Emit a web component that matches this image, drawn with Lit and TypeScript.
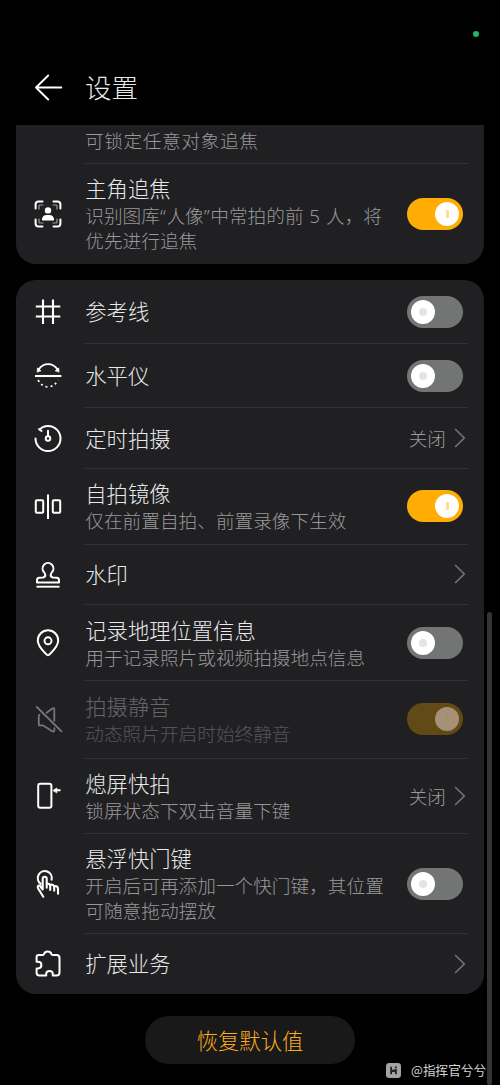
import { LitElement, html, svg, css, nothing } from "lit";
import { customElement, property } from "lit/decorators.js";
import { classMap } from "lit/directives/class-map.js";

const glyphs: Record<string, unknown> = {
  back: svg`<path d="M28.300 14.500H3M15.200 2.500 3 14.500l12.200 12" stroke-width="1.900"/>`,
  focus: svg`
    <path d="M2.600 9.500V5.600q0-3 3-3h3.900M20.500 2.600h3.900q3 0 3 3v3.900M27.400 20.500v3.900q0 3-3 3h-3.900M9.500 27.400H5.600q-3 0-3-3v-3.900" stroke-width="2"/>
    <path d="M6 10V7q0-1 1-1h3M20 6h3q1 0 1 1v3M24 20v3q0 1-1 1h-3M10 24H7q-1 0-1-1v-3" stroke-width="1.200" opacity=".55"/>
    <circle cx="15" cy="11.400" r="3.200" fill="currentColor" stroke="none"/>
    <path d="M9 21.400v-1.600q.7-3.900 4.500-3.900h3q3.800 0 4.500 3.900v1.600z" fill="currentColor" stroke="none"/>`,
  grid: svg`<path d="M10 2.500v24.500M20 2.500v24.500M2.800 9.500h24.500M2.800 19.500h24.500" stroke-width="2.100" stroke-linecap="butt"/>`,
  level: svg`
    <path d="M2 15h26.400" stroke-width="2.100" stroke-linecap="butt"/>
    <path d="M5.600 8.500q3.700-5.400 9.500-5.400t9.500 5.400" stroke-width="1.900"/>
    <path d="M4.200 10.800l.3-3.800 3.200 2.600zM26 10.800l-.3-3.800-3.200 2.600z" fill="currentColor" stroke-width=".8"/>
    <path d="M5.100 19q3.700 6.800 10 6.800t10-6.800" stroke-width="1.700" stroke-dasharray="2 3" stroke-linecap="butt"/>`,
  timer: svg`
    <path d="M2.500 14.500A12.500 12.500 0 1 0 15 2q-5.200 0-8.300 3.600" stroke-width="2"/>
    <path d="M6 5l2.600 2" stroke-width="1.900"/>
    <path d="M15 6.800v5.200" stroke-width="2"/><circle cx="15" cy="14.500" r="2.300" stroke-width="1.900"/>`,
  mirror: svg`<path d="M15 2.500v24.500" stroke-width="2" stroke-linecap="butt"/>
    <rect x="2.800" y="8.200" width="7.400" height="12.500" rx="1" stroke-width="2"/>
    <rect x="19.800" y="8.200" width="7.400" height="12.500" rx="1" stroke-width="2"/>`,
  stamp: svg`<path d="M4 22.500v-2.400q0-2.200 2.300-2.400l3.700-.3q2.500-.4 2.300-2.400 0-1.200-1.400-3a5.400 5.400 0 1 1 8.200 0q-1.400 1.800-1.400 3-.2 2 2.300 2.400l3.700.3q2.300.2 2.300 2.400v2.400z" stroke-width="2"/>
    <path d="M3.500 26.700h23" stroke-width="1.900" stroke-linecap="butt"/>`,
  pin: svg`<path d="M15 27.200q-.9 0-1.600-.8C10 22.800 4.800 18.300 4.800 12.500a10.200 10.200 0 0 1 20.400 0c0 5.800-5.200 10.300-8.600 13.900q-.7.800-1.600.8z" stroke-width="2"/>
    <circle cx="15" cy="12.800" r="3.500" stroke-width="1.900"/>`,
  mute: svg`<path d="M3.800 2l24.700 24.300" stroke-width="1.800"/>
    <path d="M6.400 9.800q-.6.500-.6 1.300v9.300h3.700q.8 0 1.500.5l8.200 5.300q2 1 2.200-1.200v-1.900" stroke-width="1.800"/>
    <path d="M13.700 7.700l5.600-4.200q2-1.200 2 .8v11.500" stroke-width="1.800"/>`,
  phone: svg`<rect x="5.200" y="2.800" width="13.200" height="24" rx="2" stroke-width="2"/>
    <path d="M26.800 9.300h-5" stroke-width="1.900"/><path d="M20.300 9.300l3.500-2.300v4.600z" fill="currentColor" stroke-width=".8"/>`,
  touch: svg`<path d="M7.700 14.800a7 7 0 1 1 10.900-4" stroke-width="2.100"/>
    <path d="M9.700 20.500V9.700q0-2 2-2t2 2v9M13.700 14.600q3.300-.4 3.500 2.600v3.800M17.400 15.700q3.600-.4 3.800 2.500v3.500M21.300 17q3.700-.2 3.700 3v4.700M9.700 20.500l-2.600-3.500q-1.700-1.200-2.300.5-.2 1 .5 2.200l5 8" stroke-width="2.100"/>`,
  puzzle: svg`<path d="M5.600 6.100h4.200q1 0 1.200-1Q11.800 2.500 14.700 2.500t3.700 2.600q.2 1 1.200 1h4q2.900 0 2.900 2.900v14.500q0 2.900-2.900 2.900h-3.800v-1.300q0-3.100-3.300-3.100t-3.300 3.100v1.300H6.200q-2.600 0-2.600-2.600v-4.400H5q3.400 0 3.400-3.300T5 12.800H3.600V8.100q0-2 2-2z" stroke-width="2"/>`,
};

const icon = (name: string) => html`<svg class="icon" width="30" height="30" viewBox="0 0 30 30" fill="none"
  stroke="currentColor" stroke-linecap="round" stroke-linejoin="round">${glyphs[name]}</svg>`;

@customElement("toggle-switch")
class ToggleSwitch extends LitElement {
  @property({ type: Boolean }) on = false;
  @property({ type: Boolean }) disabled = false;
  static styles = css`
    :host { display: block; }
    .track { box-sizing: border-box; width: 56px; height: 32px; border-radius: 16px; padding: 4px; background: #737474; display: flex; }
    .track.on { background: #ffad05; justify-content: flex-end; }
    .knob { width: 24px; height: 24px; border-radius: 50%; background: #fff; display: grid; place-items: center; }
    .mark { width: 8px; height: 8px; border-radius: 50%; background: #e4e4e4; }
    .on .mark { width: 3px; height: 8px; border-radius: 1px; background: #ffdc91; }
    .track.disabled { background: #624a17; }
    .disabled .knob { background: #a59175; }
    .disabled .mark { background: #a58e64; }
  `;
  render() {
    return html`<div class=${classMap({ track: true, on: this.on, disabled: this.disabled })}><div class="knob"><div class="mark"></div></div></div>`;
  }
}

interface Item {
  icon: string;
  title: string;
  sub?: unknown;
  height: number;
  on?: boolean;
  value?: string;
  disabled?: boolean;
}

const tracking: Item = {
  icon: "focus",
  title: "主角追焦",
  sub: html`识别图库<span class="latin">“</span>人像<span class="latin">”</span>中常拍的前<span class="latin"> 5 </span>人，将<br />优先进行追焦`,
  height: 100,
  on: true,
};

const items: Item[] = [
  { icon: "grid", title: "参考线", height: 64, on: false },
  { icon: "level", title: "水平仪", height: 64, on: false },
  { icon: "timer", title: "定时拍摄", height: 61, value: "关闭" },
  { icon: "mirror", title: "自拍镜像", sub: "仅在前置自拍、前置录像下生效", height: 75.5, on: true },
  { icon: "stamp", title: "水印", height: 60.5 },
  { icon: "pin", title: "记录地理位置信息", sub: "用于记录照片或视频拍摄地点信息", height: 76, on: false },
  { icon: "mute", title: "拍摄静音", sub: "动态照片开启时始终静音", height: 77.5, on: true, disabled: true },
  { icon: "phone", title: "熄屏快拍", sub: "锁屏状态下双击音量下键", height: 75.5, value: "关闭" },
  { icon: "touch", title: "悬浮快门键", sub: html`开启后可再添加一个快门键，其位置<br />可随意拖动摆放`, height: 100, on: false },
  { icon: "puzzle", title: "扩展业务", height: 60 },
];

@customElement("app-root")
class AppRoot extends LitElement {
  static styles = css`
    :host {
      display: flex; flex-direction: column; position: relative; box-sizing: border-box;
      width: 500px; height: 1085px; overflow: hidden; background: #000; color: #e9e9ea;
      font-family: "Noto Sans CJK SC", sans-serif; font-weight: 300;
    }
    .status { height: 50px; display: flex; justify-content: flex-end; padding: 31px 21px 0 0; box-sizing: border-box; }
    .dot { width: 6px; height: 6px; border-radius: 50%; background: #20b567; }
    .header { height: 75px; display: flex; padding-left: 33px; gap: 22px; align-items: center; }
    .heading { margin: 0; padding-bottom: 1px; font-size: 26.500px; font-weight: 300; line-height: 40px; }
    .icon { display: block; flex: none; color: #fff; }
    .card { margin: 0 16px; background: #202022; border-radius: 0 0 20px 20px; }
    .card.full { margin-top: 16px; border-radius: 20px; }
    .tail { height: 39px; box-sizing: border-box; margin: 0 16px 0 69px; padding-top: 2px; border-bottom: 1px solid #333335; }
    .tail .sub { letter-spacing: .62px; }
    .row { display: flex; padding-left: 17px; gap: 22px; align-items: center; }
    .body {
      flex: 1; height: 100%; box-sizing: border-box; display: flex; align-items: center;
      justify-content: space-between; margin-right: 16px; padding-right: 5px; border-bottom: 1px solid #333335;
    }
    .row.last .body { border-bottom-color: transparent; }
    .text { white-space: nowrap; padding-bottom: 2px; padding-left: .3px; }
    .title { font-size: 21.300px; line-height: 29px; }
    .sub { font-size: 18.670px; line-height: 25px; color: #98989a; white-space: nowrap; }
    .latin { font-family: "Noto Sans", sans-serif; line-height: 1; letter-spacing: .7px; white-space: pre; }
    .disabled .icon { color: #77777a; }
    .disabled .title { color: #656567; }
    .disabled .sub { color: #565658; }
    .link { display: flex; align-items: center; gap: 8px; margin-right: -3px; color: #9a9a9c; font-size: 18.670px; line-height: 25px; }
    .value { padding-bottom: 1px; }
    .chevron { display: block; color: #727274; }
    .reset {
      align-self: center; margin-top: 22px; width: 210px; height: 48px; border: 0; padding: 0 0 1px; border-radius: 24px;
      background: #19191a; color: #fbad1d; font: inherit; font-size: 21.300px; line-height: 46px;
    }
    .scrollbar { position: absolute; left: 487px; top: 612px; width: 5px; height: 473px; border-radius: 3px; background: #353536; }
    .credit { position: absolute; right: 14px; bottom: 5px; display: flex; align-items: center; gap: 10px; color: #d4d4d4; font-size: 12.600px; line-height: 20px; font-weight: 400; }
    .badge { display: block; }
  `;

  private chevron = html`<svg class="chevron" width="12" height="20" viewBox="0 0 12 20" fill="none"
    stroke="currentColor" stroke-width="1.700" stroke-linecap="round"><path d="M1.600 1.500 10.300 10l-8.700 8.500" /></svg>`;

  private row(item: Item, last = false) {
    return html`<div class=${classMap({ row: true, last, disabled: !!item.disabled })} style="height:${item.height}px">
      ${icon(item.icon)}
      <div class="body">
        <div class="text">
          <div class="title">${item.title}</div>
          ${item.sub ? html`<div class="sub">${item.sub}</div>` : nothing}
        </div>
        ${item.on === undefined
          ? html`<div class="link">${item.value ? html`<span class="value">${item.value}</span>` : nothing}${this.chevron}</div>`
          : html`<toggle-switch ?on=${item.on} ?disabled=${!!item.disabled}></toggle-switch>`}
      </div>
    </div>`;
  }

  render() {
    return html`
      <div class="status"><div class="dot"></div></div>
      <header class="header">${icon("back")}<h1 class="heading">设置</h1></header>
      <section class="card">
        <div class="tail"><div class="sub">可锁定任意对象追焦</div></div>
        ${this.row(tracking, true)}
      </section>
      <section class="card full">${items.map((item, i) => this.row(item, i === items.length - 1))}</section>
      <button class="reset">恢复默认值</button>
      <div class="scrollbar"></div>
      <div class="credit">
        <svg class="badge" width="15" height="15" viewBox="0 0 14 14" fill="none">
          <rect width="14" height="14" rx="3" fill="#a3a3a3" />
          <path d="M4.800 3.500v7M4.800 7.500l4.400-1v4M9.200 3.300v1.500" stroke="#222" stroke-width="1.700" />
        </svg>
        <span>@指挥官兮兮</span>
      </div>`;
  }
}
